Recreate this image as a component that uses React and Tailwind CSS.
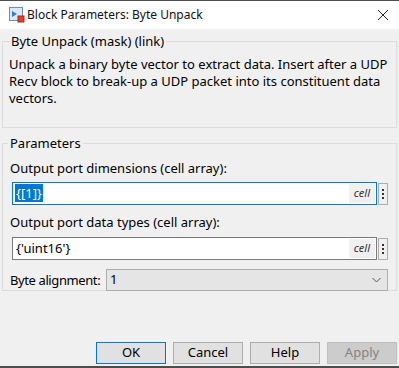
import React from 'react';

const BlockIcon = () => (
  <svg width="16" height="16" viewBox="0 0 16 16" className="shrink-0">
    <rect x="0.5" y="0.5" width="13" height="13" fill="#dbe9f6" stroke="#6a8fb5" />
    <path d="M3 4 L8 7 L3 10 Z" fill="#2a7fd4" />
    <rect x="9" y="9" width="6" height="6" fill="#e0402a" stroke="#a52a18" />
  </svg>
);

const CloseIcon = () => (
  <svg width="12" height="12" viewBox="0 0 12 12">
    <path d="M1 1 L11 11 M11 1 L1 11" stroke="#222" strokeWidth="1" />
  </svg>
);

const MoreButton = () => (
  <div className="w-[10px] h-[22px] border border-[#adadad] bg-[#f0f0f0] flex flex-col items-center justify-center gap-[2px]">
    <span className="w-[2px] h-[2px] bg-[#333]" />
    <span className="w-[2px] h-[2px] bg-[#333]" />
    <span className="w-[2px] h-[2px] bg-[#333]" />
  </div>
);

const CellField = ({ value, focused }) => (
  <div className="flex items-center gap-[1px] pl-[9px] pr-[8px]">
    <div
      className={`flex-1 h-[23px] bg-white border flex items-center pl-[2px] pr-[1px] ${
        focused ? 'border-[#0078d7]' : 'border-[#7a7a7a]'
      }`}
    >
      <span className={`flex-1 leading-[17px] ${focused ? '' : 'pl-[1px]'}`}>
        {focused ? (
          <span className="bg-[#0078d7] text-white px-[1px]">{value}</span>
        ) : (
          value
        )}
      </span>
      <span className="h-[19px] px-[5px] bg-[#f0f0f0] text-[11px] italic text-[#333] flex items-center">
        cell
      </span>
    </div>
    <MoreButton />
  </div>
);

const DialogButton = ({ children, primary, disabled }) => (
  <div
    className={`w-[70px] h-[22px] flex items-center justify-center border ${
      disabled
        ? 'bg-[#cccccc] border-[#bfbfbf] text-[#838383]'
        : primary
        ? 'bg-[#e1e1e1] border-[#0078d7] text-black'
        : 'bg-[#e1e1e1] border-[#adadad] text-black'
    }`}
  >
    {children}
  </div>
);

export default function App() {
  return (
    <div
      className="w-[399px] h-[368px] bg-[#f0f0f0] flex flex-col text-[13px] text-black border-t border-b-2 border-[#4d4d4d] overflow-hidden"
      style={{ fontFamily: '"Noto Sans", "Liberation Sans", sans-serif' }}
    >
      <div className="h-[28px] bg-white flex items-center pl-[9px] pr-[10px]">
        <BlockIcon />
        <span className="ml-[2px] text-[12px] text-[#111]">Block Parameters: Byte Unpack</span>
        <span className="ml-auto">
          <CloseIcon />
        </span>
      </div>

      <fieldset className="mx-[2px] mt-[4px] h-[95px] border border-[#dcdcdc] px-[6px]">
        <legend className="px-[2px] ml-[0px] leading-[16px]">Byte Unpack (mask) (link)</legend>
        <p className="mt-[7px] leading-[17px]">
          Unpack a binary byte vector to extract data. Insert after a UDP Recv block to break-up a UDP packet into its
          constituent data vectors.
        </p>
      </fieldset>

      <fieldset className="mx-[2px] mt-[7px] h-[156px] border border-[#dcdcdc]">
        <legend className="px-[2px] ml-[5px] leading-[16px]">Parameters</legend>
        <div className="pl-[7px] mt-[9px] leading-[17px]">Output port dimensions (cell array):</div>
        <div className="mt-[5px]">
          <CellField value="{[1]}" focused />
        </div>
        <div className="pl-[7px] mt-[9px] leading-[17px]">Output port data types (cell array):</div>
        <div className="mt-[6px]">
          <CellField value="{'uint16'}" />
        </div>
        <div className="flex items-center mt-[9px] pl-[7px] pr-[8px]">
          <span className="w-[96px] shrink-0 whitespace-nowrap leading-[17px] tracking-[-0.4px]">Byte alignment:</span>
          <div className="flex-1 h-[22px] bg-[#e5e5e5] border border-[#adadad] flex items-center pl-[3px] pr-[6px]">
            <span className="flex-1">1</span>
            <svg width="9" height="6" viewBox="0 0 9 6">
              <path d="M0.5 1 L4.5 5 L8.5 1" fill="none" stroke="#555" strokeWidth="1" />
            </svg>
          </div>
        </div>
      </fieldset>

      <div className="mt-auto mb-[2px] flex justify-end gap-[7px] pr-[2px]">
        <DialogButton primary>OK</DialogButton>
        <DialogButton>Cancel</DialogButton>
        <DialogButton>Help</DialogButton>
        <DialogButton disabled>Apply</DialogButton>
      </div>
    </div>
  );
}
